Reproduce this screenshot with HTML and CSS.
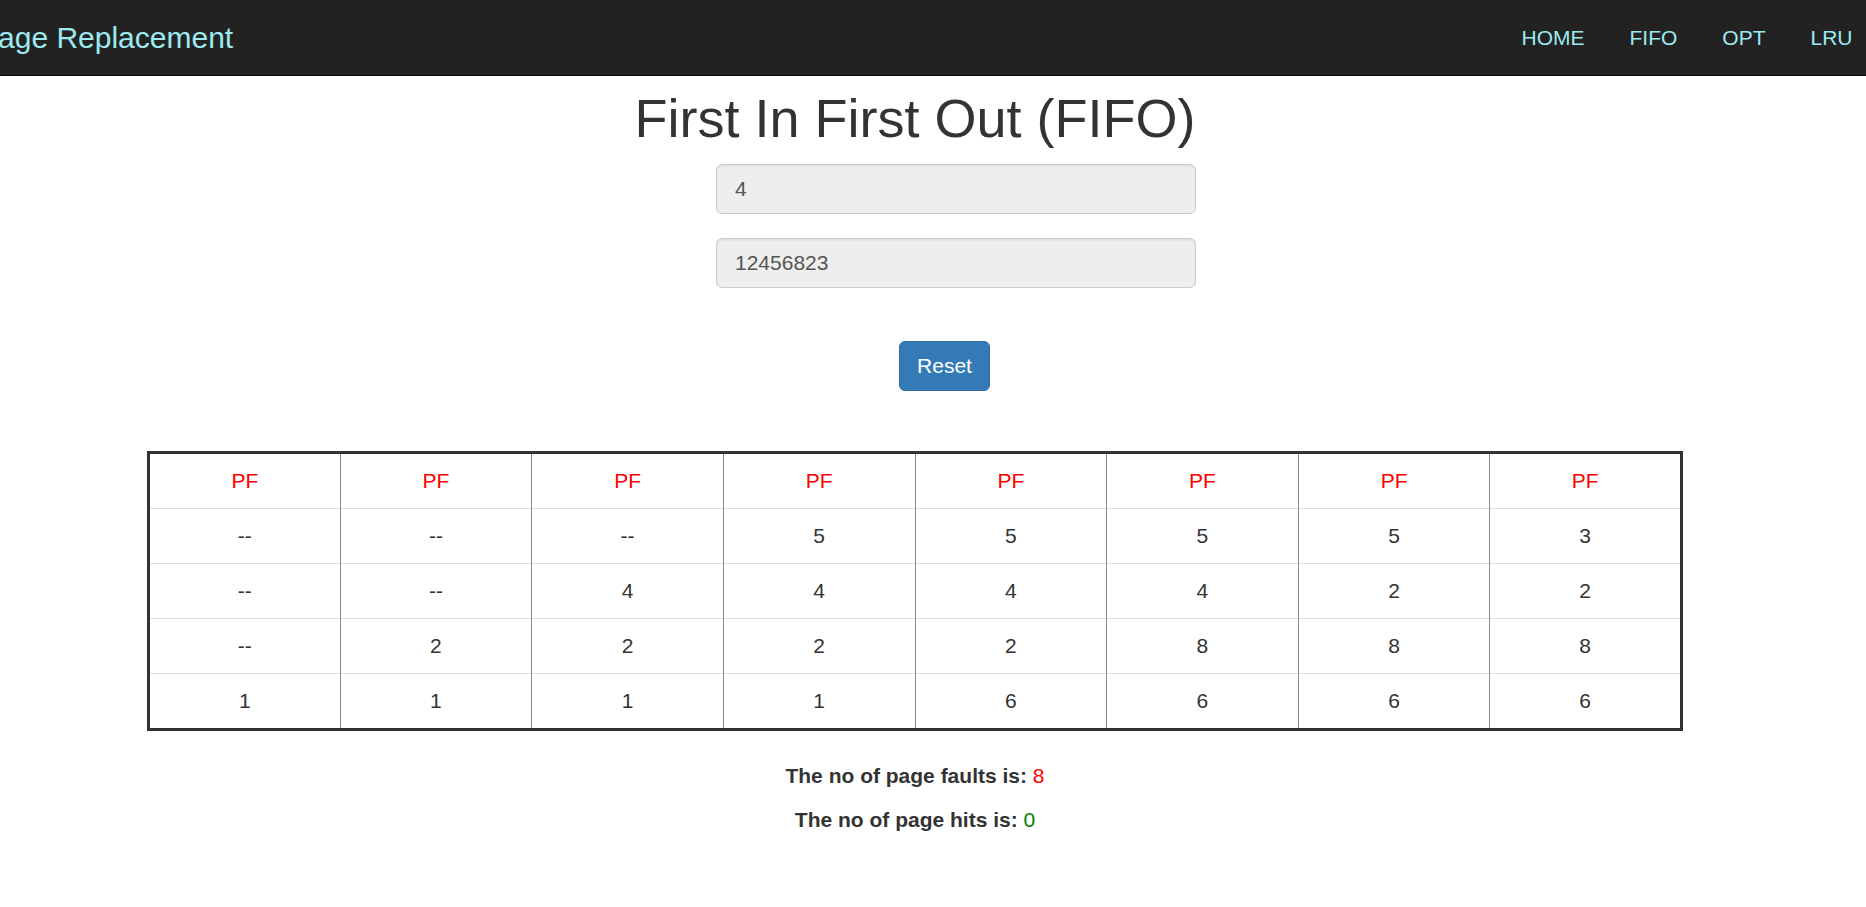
FILE: index.html
```html
<!DOCTYPE html>
<html lang="en">
<head>
<meta charset="utf-8">
<title>Page Replacement - FIFO</title>
<link rel="stylesheet" href="styles.css">
</head>
<body>
<nav class="navbar">
  <div class="brand">Page Replacement</div>
  <ul class="nav-links">
    <li><a href="#">HOME</a></li>
    <li><a href="#">FIFO</a></li>
    <li><a href="#">OPT</a></li>
    <li><a href="#">LRU</a></li>
  </ul>
</nav>
<main class="page">
  <h1 class="title">First In First Out (FIFO)</h1>
  <form class="inputs">
    <input class="field" type="text" value="4" readonly>
    <input class="field" type="text" value="12456823" readonly>
  </form>
  <div class="actions"><button class="btn" type="button">Reset</button></div>
  <table class="frames">
    <tr class="status"><td>PF</td><td>PF</td><td>PF</td><td>PF</td><td>PF</td><td>PF</td><td>PF</td><td>PF</td></tr>
    <tr><td>--</td><td>--</td><td>--</td><td>5</td><td>5</td><td>5</td><td>5</td><td>3</td></tr>
    <tr><td>--</td><td>--</td><td>4</td><td>4</td><td>4</td><td>4</td><td>2</td><td>2</td></tr>
    <tr><td>--</td><td>2</td><td>2</td><td>2</td><td>2</td><td>8</td><td>8</td><td>8</td></tr>
    <tr><td>1</td><td>1</td><td>1</td><td>1</td><td>6</td><td>6</td><td>6</td><td>6</td></tr>
  </table>
  <div class="results">
    <p><b>The no of page faults is:</b> <span class="faults">8</span></p>
    <p><b>The no of page hits is:</b> <span class="hits">0</span></p>
  </div>
</main>
</body>
</html>
```
FILE: styles.css
```css
html, body {
  margin: 0;
  padding: 0;
  background: #fff;
}
body {
  font-family: "Liberation Sans", Arial, Helvetica, sans-serif;
  font-size: 21px;
  line-height: 30px;
  color: #333;
  overflow: hidden;
  width: 1866px;
  height: 907px;
}

/* Navbar */
.navbar {
  height: 75px;
  background: #222;
  border-bottom: 1px solid #080808;
  display: flex;
  align-items: center;
  justify-content: space-between;
}
.brand {
  margin-left: -22px;
  font-size: 30px;
  line-height: 30px;
  color: #9de9ef;
  white-space: nowrap;
}
.nav-links {
  list-style: none;
  margin: 0 -9px 0 0;
  padding: 0;
  display: flex;
}
.nav-links a {
  display: block;
  padding: 0 22.5px;
  font-size: 21px;
  line-height: 30px;
  color: #9de9ef;
  text-decoration: none;
}

/* Content */
.page {
  width: 1830px;
}
.title {
  margin: 13px 0 0;
  font-size: 54px;
  line-height: 59px;
  font-weight: 500;
  text-align: center;
  color: #333;
}
.inputs {
  margin: 16px 0 0 716px;
  width: 480px;
  display: flex;
  flex-direction: column;
  gap: 24px;
}
.field {
  box-sizing: border-box;
  width: 480px;
  height: 50px;
  margin: 0;
  padding: 9px 18px;
  font-family: "Liberation Sans", Arial, sans-serif;
  font-size: 21px;
  color: #555;
  background: #eee;
  border: 1.5px solid #ccc;
  border-radius: 6px;
  box-shadow: inset 0 1.5px 1.5px rgba(0, 0, 0, 0.075);
  outline: none;
}
.actions {
  margin: 53px 0 0 899px;
}
.btn {
  box-sizing: border-box;
  width: 91px;
  height: 50px;
  padding: 0;
  font-family: "Liberation Sans", Arial, sans-serif;
  font-size: 21px;
  color: #fff;
  background: #337ab7;
  border: 1.5px solid #2e6da4;
  border-radius: 6px;
}

/* Table */
.frames {
  width: 1536px;
  margin: 60px auto 0;
  border-collapse: collapse;
  border: 3px solid #333;
  table-layout: fixed;
}
.frames td {
  padding: 12px 0;
  line-height: 30px;
  height: 30px;
  text-align: center;
  border-top: 1px solid #ddd;
  border-left: 1px solid #888;
  border-right: 1px solid #888;
  color: #333;
}
.frames .status td {
  color: #f00;
}

/* Results */
.results {
  margin-top: 30px;
  text-align: center;
}
.results p {
  margin: 0 0 14px;
  line-height: 30px;
}
.results b {
  font-weight: bold;
}
.faults {
  color: #f00;
}
.hits {
  color: #008000;
}
```
